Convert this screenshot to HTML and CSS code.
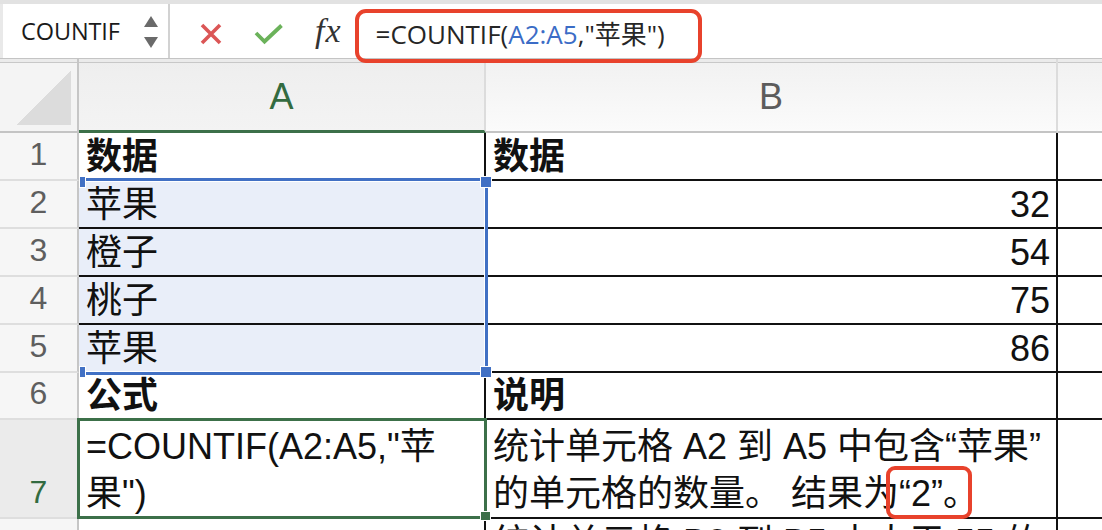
FILE: index.html
```html
<!DOCTYPE html>
<html lang="zh-CN">
<head>
<meta charset="utf-8">
<title>COUNTIF</title>
<link rel="stylesheet" href="styles.css">
</head>
<body>
<div class="app">
  <div class="toolbar">
    <div class="namebox">
      <span class="name">COUNTIF</span>
      <span class="spinner"><i class="tri-up"></i><i class="tri-down"></i></span>
    </div>
    <div class="actions">
      <svg class="icon" width="24" height="22" viewBox="0 0 24 22"><path d="M3 2 L21 20 M21 2 L3 20" stroke="#db5656" stroke-width="3.6" fill="none"/></svg>
      <svg class="icon" width="30" height="22" viewBox="0 0 30 22"><path d="M2 10 L10.5 18.5 L27.5 2.5" stroke="#6bb25a" stroke-width="3.8" fill="none"/></svg>
      <span class="fx">fx</span>
    </div>
    <div class="formula">=COUNTIF(<span class="ref">A2:A5</span>,"苹果")</div>
  </div>

  <div class="sheet-wrap">
    <div class="sheet">
      <div class="corner"></div>
      <div class="ch ch-sel">A</div>
      <div class="ch">B</div>
      <div class="ch ch-last"></div>

      <div class="rh">1</div>
      <div class="c b">数据</div>
      <div class="c b">数据</div>
      <div class="c c-last"></div>

      <div class="rh">2</div>
      <div class="c sel">苹果</div>
      <div class="c num">32</div>
      <div class="c c-last"></div>

      <div class="rh">3</div>
      <div class="c sel">橙子</div>
      <div class="c num">54</div>
      <div class="c c-last"></div>

      <div class="rh">4</div>
      <div class="c sel">桃子</div>
      <div class="c num">75</div>
      <div class="c c-last"></div>

      <div class="rh">5</div>
      <div class="c sel">苹果</div>
      <div class="c num">86</div>
      <div class="c c-last"></div>

      <div class="rh">6</div>
      <div class="c b">公式</div>
      <div class="c b">说明</div>
      <div class="c c-last"></div>

      <div class="rh rh-act">7</div>
      <div class="c wrap">=COUNTIF(A2:A5,"苹果")</div>
      <div class="c wrap">统计单元格 A2 到 A5 中包含“苹果”的单元格的数量。 结果为“2”。</div>
      <div class="c c-last"></div>

      <div class="rh">8</div>
      <div class="c wrap"></div>
      <div class="c wrap top">统计单元格 B2 到 B5 中大于 55 的单元格的数量。</div>
      <div class="c c-last"></div>
    </div>

    <div class="overlay">
      <div class="range">
        <i class="h h-tl"></i><i class="h h-tr"></i><i class="h h-bl"></i><i class="h h-br"></i>
      </div>
      <div class="active"><i class="fill"></i></div>
    </div>
  </div>

  <div class="annot annot-formula"></div>
  <div class="annot annot-result"></div>
</div>
</body>
</html>
```

FILE: styles.css
```css
* { box-sizing: border-box; margin: 0; padding: 0; }
html, body { width: 1102px; height: 530px; overflow: hidden; background: #fff; }
body { font-family: "Liberation Sans", "Noto Sans CJK SC", sans-serif; color: #111; }

.app { position: relative; width: 1102px; height: 530px; overflow: hidden; }

/* ---------- toolbar ---------- */
.toolbar {
  display: flex;
  align-items: center;
  height: 59px;
  border-top: 4px solid #e2e2e2;
  border-bottom: 1px solid #c4c4c4;
  background: #fff;
}
.namebox {
  width: 170px;
  height: 100%;
  display: flex;
  align-items: center;
  justify-content: space-between;
  padding: 0 10px 0 18px;
  border-left: 3px solid #e9e9e9;
  border-right: 2px solid #d2d2d2;
}
.name {
  font-family: "Open Sans", sans-serif;
  font-size: 23.5px;
  color: #1a1a1a;
  letter-spacing: -0.1px;
}
.spinner { display: flex; flex-direction: column; gap: 10px; padding-top: 2px; }
.tri-up, .tri-down { display: block; width: 0; height: 0; border-left: 7px solid transparent; border-right: 7px solid transparent; }
.tri-up { border-bottom: 11px solid #6a6a6a; }
.tri-down { border-top: 11px solid #6a6a6a; }

.actions { display: flex; align-items: center; margin-left: 29px; padding-top: 5px; }
.icon { display: block; }
.actions .icon + .icon { margin-left: 31px; }
.fx {
  margin-left: 31px;
  font-family: "Liberation Serif", serif;
  font-style: italic;
  font-size: 34px;
  color: #333;
  margin-top: -5px;
  letter-spacing: 1px;
}
.formula {
  margin-left: 34px;
  font-family: "Open Sans", "Noto Sans CJK SC", sans-serif;
  font-size: 26px;
  color: #262626;
  padding-top: 4px;
}
.formula .ref { color: #3b6cc6; }

/* ---------- sheet ---------- */
.sheet-wrap { display: grid; }
.sheet, .overlay {
  grid-area: 1 / 1;
  display: grid;
  grid-template-columns: 79px 407px 572px 1fr;
  grid-template-rows: 74px 48px 48px 48px 48px 48px 47px 99px 92px;
}
.overlay { pointer-events: none; }

.corner {
  background:
    linear-gradient(to top left, #dcdcdc 50%, transparent 50%) right 6px bottom 6px / 55px 54px no-repeat,
    #f4f4f4;
  border-right: 2px solid #c6c6c6;
  border-bottom: 2px solid #c4c4c4;
  box-shadow: inset 0 3px #ebebeb, inset 0 4px #c8c8c8;
}
.ch {
  display: flex;
  align-items: center;
  justify-content: center;
  padding-top: 4px;
  font-size: 36px;
  color: #5c5c5c;
  background: linear-gradient(#f1f1f1, #fbfbfb);
  border-right: 2px solid #dcdcdc;
  border-bottom: 2px solid #c4c4c4;
  box-shadow: inset 0 3px #ebebeb, inset 0 4px #c8c8c8;
}
.ch-sel {
  color: #336b40;
  background: linear-gradient(#eeeeee, #f3f3f3);
  border-bottom: 3px solid #3c7049;
}
.ch-last { border-right: none; }

.rh {
  display: flex;
  align-items: flex-end;
  justify-content: center;
  padding-bottom: 9px;
  font-size: 32px;
  line-height: 32px;
  color: #5e5e5e;
  background: #f6f6f6;
  border-right: 2px solid #c6c6c6;
  border-bottom: 2px solid #dedede;
}
.rh-act { color: #336b40; background: #ebebeb; }

.c {
  display: flex;
  align-items: flex-end;
  padding: 0 6px 0 7px;
  font-size: 36px;
  line-height: 44px;
  border-right: 2px solid #111;
  border-bottom: 2px solid #111;
  overflow: hidden;
  background: #fff;
}
.c-last { border-right: none; }
.b { font-weight: 700; }
.sel { background: #e9eef9; }
.num { justify-content: flex-end; }
.wrap { line-height: 47px; }
.top { align-items: flex-start; }

/* reference range A2:A5 */
.range {
  grid-column: 2;
  grid-row: 3 / 7;
  position: relative;
  margin: -3px -2px -2px 1px;
  border: 3px solid #4170c4;
  border-left: none;
  box-shadow: inset -1px 0 #fff, inset 0 1px #fff, inset 0 -1px #fff;
}
.h {
  position: absolute;
  width: 10px;
  height: 10px;
  background: #4170c4;
  outline: 1px solid #fff;
}
.h-tl { left: 0; top: -4px; width: 5px; }
.h-tr { right: -6px; top: -4px; }
.h-bl { left: 0; bottom: -5px; width: 5px; }
.h-br { right: -6px; bottom: -5px; }

/* active cell A7 */
.active {
  grid-column: 2;
  grid-row: 8;
  position: relative;
  margin: -2px -1px 0 -2px;
  border: 3px solid #3c7049;
}
.fill {
  position: absolute;
  right: -6px;
  bottom: -4px;
  width: 9px;
  height: 8px;
  background: #3c7049;
  outline: 1px solid #fff;
}

/* red annotation boxes */
.annot {
  position: absolute;
  border: 4px solid #e8422c;
  pointer-events: none;
}
.annot-formula { left: 355px; top: 9px; width: 347px; height: 54px; border-radius: 11px; }
.annot-result { left: 886px; top: 466px; width: 86px; height: 53px; border-radius: 9px; }
```
